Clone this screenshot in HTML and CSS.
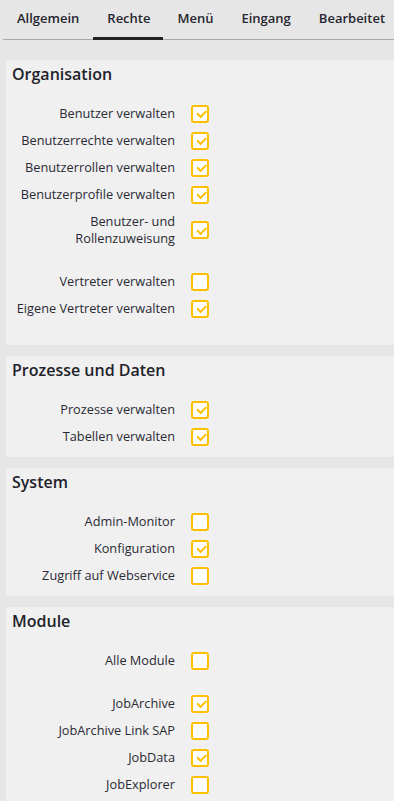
FILE: index.html
```html
<!DOCTYPE html>
<html lang="de">
<head>
<meta charset="utf-8">
<title>Rechte</title>
<link rel="stylesheet" href="styles.css">
</head>
<body>
<nav class="tabs">
  <div class="tab">Allgemein</div>
  <div class="tab active">Rechte</div>
  <div class="tab">Menü</div>
  <div class="tab">Eingang</div>
  <div class="tab">Bearbeitet</div>
</nav>
<main class="content">
  <section class="panel">
    <h2 class="panel-title">Organisation</h2>
    <div class="rows">
      <label class="row"><span class="label">Benutzer verwalten</span><span class="cb checked"></span></label>
      <label class="row"><span class="label">Benutzerrechte verwalten</span><span class="cb checked"></span></label>
      <label class="row"><span class="label">Benutzerrollen verwalten</span><span class="cb checked"></span></label>
      <label class="row"><span class="label">Benutzerprofile verwalten</span><span class="cb checked"></span></label>
      <label class="row"><span class="label">Benutzer- und Rollenzuweisung</span><span class="cb checked"></span></label>
      <div class="spacer"></div>
      <label class="row"><span class="label">Vertreter verwalten</span><span class="cb"></span></label>
      <label class="row"><span class="label">Eigene Vertreter verwalten</span><span class="cb checked"></span></label>
      <div class="spacer"></div>
    </div>
  </section>
  <section class="panel">
    <h2 class="panel-title">Prozesse und Daten</h2>
    <div class="rows">
      <label class="row"><span class="label">Prozesse verwalten</span><span class="cb checked"></span></label>
      <label class="row"><span class="label">Tabellen verwalten</span><span class="cb checked"></span></label>
    </div>
  </section>
  <section class="panel">
    <h2 class="panel-title">System</h2>
    <div class="rows">
      <label class="row"><span class="label">Admin-Monitor</span><span class="cb"></span></label>
      <label class="row"><span class="label">Konfiguration</span><span class="cb checked"></span></label>
      <label class="row"><span class="label">Zugriff auf Webservice</span><span class="cb"></span></label>
    </div>
  </section>
  <section class="panel">
    <h2 class="panel-title">Module</h2>
    <div class="rows">
      <label class="row"><span class="label">Alle Module</span><span class="cb"></span></label>
      <div class="spacer"></div>
      <label class="row"><span class="label">JobArchive</span><span class="cb checked"></span></label>
      <label class="row"><span class="label">JobArchive Link SAP</span><span class="cb"></span></label>
      <label class="row"><span class="label">JobData</span><span class="cb checked"></span></label>
      <label class="row"><span class="label">JobExplorer</span><span class="cb"></span></label>
    </div>
  </section>
</main>
</body>
</html>
```
FILE: styles.css
```css
html, body {
  margin: 0;
  padding: 0;
  height: 100%;
  overflow: hidden;
}
body {
  background: #e6e6e6;
  font-family: "Open Sans", "Liberation Sans", sans-serif;
  color: #2a2a34;
}
.tabs {
  display: flex;
  margin-left: 3px;
  height: 39px;
  border-bottom: 1px solid #a9a9a9;
  white-space: nowrap;
}
.tab {
  padding: 0 14px;
  font-size: 13px;
  font-weight: 600;
  line-height: 36px;
  color: #262630;
  box-sizing: border-box;
  height: 40px;
  border-bottom: 3px solid transparent;
}
.tab.active {
  border-bottom-color: #222;
  padding: 0 13px 0 14px;
}
.content {
  display: flex;
  flex-direction: column;
  gap: 11px;
  padding: 20px 0 0 6px;
}
.panel {
  background: #f0f0f0;
  border-radius: 3px 0 0 3px;
  padding: 3px 0 7px 6px;
}
.panel-title {
  margin: 0 0 15px 0;
  font-size: 16px;
  font-weight: 600;
  line-height: 22px;
  color: #22222a;
}
.rows {
  display: flex;
  flex-direction: column;
}
.row {
  display: flex;
  align-items: center;
  gap: 16px;
}
.label {
  width: 163px;
  padding: 5px 0;
  text-align: right;
  font-size: 12.75px;
  line-height: 17px;
}
.spacer {
  height: 16px;
}
.cb {
  flex: none;
  width: 18px;
  height: 18px;
  box-sizing: border-box;
  border: 2px solid #ffbf00;
  border-radius: 3px;
  background: #ffffff;
  position: relative;
}
.cb.checked::after {
  content: "";
  position: absolute;
  left: 4px;
  top: 3.5px;
  width: 7px;
  height: 3.5px;
  border-left: 2px solid #ffbf00;
  border-bottom: 2px solid #ffbf00;
  transform: rotate(-45deg);
}
```
